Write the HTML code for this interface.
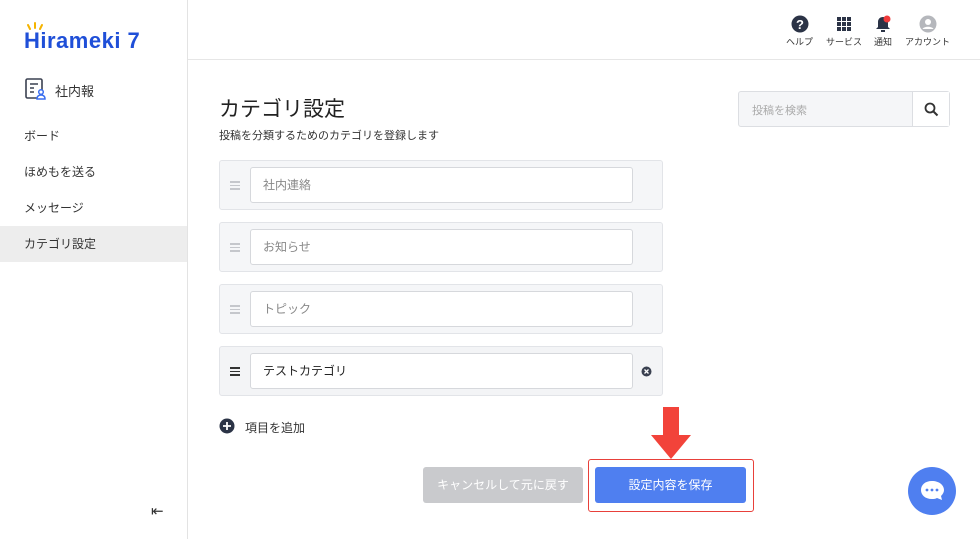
<!DOCTYPE html>
<html><head><meta charset="utf-8"><style>
*{box-sizing:border-box;margin:0;padding:0}
body{width:980px;height:539px;overflow:hidden;background:#fff;font-family:"Liberation Sans","Noto Sans CJK JP",sans-serif;color:#333;position:relative}
.side{position:absolute;left:0;top:0;width:188px;height:539px;border-right:1px solid #e3e3e3}
.logo{position:absolute;left:24px;top:28px;font-size:22px;font-weight:bold;color:#1f4fd8;letter-spacing:0.5px}
.nav{position:absolute;left:0;width:187px;height:36px;line-height:36px;padding-left:24px;font-size:12px;color:#333}
.top{position:absolute;left:188px;top:0;right:0;height:60px;border-bottom:1px solid #e6e6e6}
.ti{position:absolute;top:15px;text-align:center;font-size:9px;color:#333}
.row{position:absolute;left:219px;width:444px;height:50px;background:#f5f6f8;border:1px solid #e2e4e8;border-radius:3px}
.inp{position:absolute;left:30px;top:6px;width:383px;height:36px;background:#fff;border:1px solid #d6d8dc;border-radius:3px;font-size:12px;color:#888;line-height:34px;padding-left:12px}
.hd{position:absolute;left:10px;top:20px;width:10px}
.hd i{display:block;height:1.5px;background:#c5c7cc;margin-bottom:2px}
</style></head><body>
<div class="side">
<svg style="position:absolute;left:27px;top:22px" width="16" height="8"><path d="M3 7L1 3M8 6V1M13 7l2-4" stroke="#f5b400" stroke-width="2" stroke-linecap="round"/></svg>
<div class="logo">Hirameki 7</div>
<svg style="position:absolute;left:25px;top:78px" width="22" height="22" viewBox="0 0 22 22"><rect x="1" y="1" width="16" height="19" rx="1.5" fill="none" stroke="#3a4050" stroke-width="1.6"/><path d="M5 6h8M5 10h4M5 14h4" stroke="#3a4050" stroke-width="1.6"/><circle cx="16" cy="14" r="2.3" fill="#fff" stroke="#3b6ff0" stroke-width="1.5"/><path d="M12 21c0-3 2-4 4-4s4 1 4 4z" fill="#fff" stroke="#3b6ff0" stroke-width="1.5"/></svg>
<div style="position:absolute;left:55px;top:81px;font-size:13px">社内報</div>
<div class="nav" style="top:118px">ボード</div>
<div class="nav" style="top:154px">ほめもを送る</div>
<div class="nav" style="top:190px">メッセージ</div>
<div class="nav" style="top:226px;background:#ededed">カテゴリ設定</div>
<div style="position:absolute;left:151px;top:502px;font-size:15px;color:#333">⇤</div>
</div>
<div class="top">
<div class="ti" style="left:598px"><svg width="18" height="18"><circle cx="9" cy="9" r="8.5" fill="#2b3346"/><text x="9" y="14" font-size="13" font-weight="bold" fill="#fff" text-anchor="middle" font-family="Liberation Sans">?</text></svg><br>ヘルプ</div>
<div class="ti" style="left:638px"><svg width="18" height="18" viewBox="0 0 18 18" fill="#2b3346"><rect x="2" y="2" width="4" height="4"/><rect x="7" y="2" width="4" height="4"/><rect x="12" y="2" width="4" height="4"/><rect x="2" y="7" width="4" height="4"/><rect x="7" y="7" width="4" height="4"/><rect x="12" y="7" width="4" height="4"/><rect x="2" y="12" width="4" height="4"/><rect x="7" y="12" width="4" height="4"/><rect x="12" y="12" width="4" height="4"/></svg><br>サービス</div>
<div class="ti" style="left:686px"><svg width="18" height="18" viewBox="0 0 18 18"><path d="M9 2c-3 0-5 2-5 5v5l-2 2h14l-2-2V7c0-3-2-5-5-5z" fill="#2b3346"/><rect x="7" y="15" width="4" height="2" fill="#2b3346"/><circle cx="13" cy="4" r="3.5" fill="#f03a3a"/></svg><br>通知</div>
<div class="ti" style="left:717px"><svg width="18" height="18"><circle cx="9" cy="9" r="8.5" fill="#b5b7bc"/><circle cx="9" cy="7" r="3" fill="#fff"/><path d="M3.5 14c1.5-3 9.5-3 11 0" fill="#fff"/></svg><br>アカウント</div>
</div>
<div style="position:absolute;left:219px;top:93px;font-size:21px;color:#222">カテゴリ設定</div>
<div style="position:absolute;left:219px;top:127px;font-size:11px;color:#333">投稿を分類するためのカテゴリを登録します</div>
<div style="position:absolute;left:738px;top:91px;width:212px;height:36px;background:#f5f6f8;border:1px solid #dcdee2;border-radius:3px"><span style="position:absolute;left:13px;top:10px;font-size:11px;color:#aaa">投稿を検索</span><div style="position:absolute;right:0;top:0;width:37px;height:34px;background:#fff;border-left:1px solid #dcdee2"><svg style="position:absolute;left:11px;top:10px" width="15" height="15"><circle cx="6" cy="6" r="4.5" fill="none" stroke="#333" stroke-width="1.8"/><path d="M9.5 9.5l4 4" stroke="#333" stroke-width="2"/></svg></div></div>
<div class="row" style="top:160px"><div class="hd"><i></i><i></i><i></i></div><div class="inp">社内連絡</div></div>
<div class="row" style="top:222px"><div class="hd"><i></i><i></i><i></i></div><div class="inp">お知らせ</div></div>
<div class="row" style="top:284px"><div class="hd"><i></i><i></i><i></i></div><div class="inp">トピック</div></div>
<div class="row" style="top:346px;background:#f3f4f6"><div class="hd"><i style="background:#333"></i><i style="background:#333"></i><i style="background:#333"></i></div><div class="inp" style="color:#222">テストカテゴリ</div><svg style="position:absolute;left:421px;top:19px" width="11" height="11"><circle cx="5.5" cy="5.5" r="5" fill="#3a4050"/><path d="M3.5 3.5l4 4M7.5 3.5l-4 4" stroke="#fff" stroke-width="1.3"/></svg></div>
<svg style="position:absolute;left:219px;top:418px" width="16" height="16"><circle cx="8" cy="8" r="7.5" fill="#2b3346"/><path d="M8 4v8M4 8h8" stroke="#fff" stroke-width="1.8"/></svg>
<div style="position:absolute;left:245px;top:419px;font-size:12px;color:#333">項目を追加</div>
<div style="position:absolute;left:423px;top:467px;width:160px;height:36px;background:#c9cacd;border-radius:3px;color:#fff;font-size:12px;text-align:center;line-height:36px">キャンセルして元に戻す</div>
<div style="position:absolute;left:588px;top:459px;width:166px;height:53px;border:1px solid #e8403a;border-radius:3px"></div>
<div style="position:absolute;left:595px;top:467px;width:151px;height:36px;background:#4f7ff0;border-radius:3px;color:#fff;font-size:12px;text-align:center;line-height:36px">設定内容を保存</div>
<svg style="position:absolute;left:649px;top:406px" width="44" height="54"><path d="M14 1h16v28h12L22 53 2 29h12z" fill="#f2433a"/></svg>
<svg style="position:absolute;left:908px;top:467px" width="48" height="48"><circle cx="24" cy="24" r="24" fill="#4f7ff0"/><path d="M24 14c-7 0-11 4-11 9s4 9 11 9c2 0 3 0 5-1l5 2-1-4c2-2 3-4 3-6 0-5-5-9-12-9z" fill="#fff"/><circle cx="19" cy="23" r="1.4" fill="#4f7ff0"/><circle cx="24" cy="23" r="1.4" fill="#4f7ff0"/><circle cx="29" cy="23" r="1.4" fill="#4f7ff0"/></svg>
</body></html>
